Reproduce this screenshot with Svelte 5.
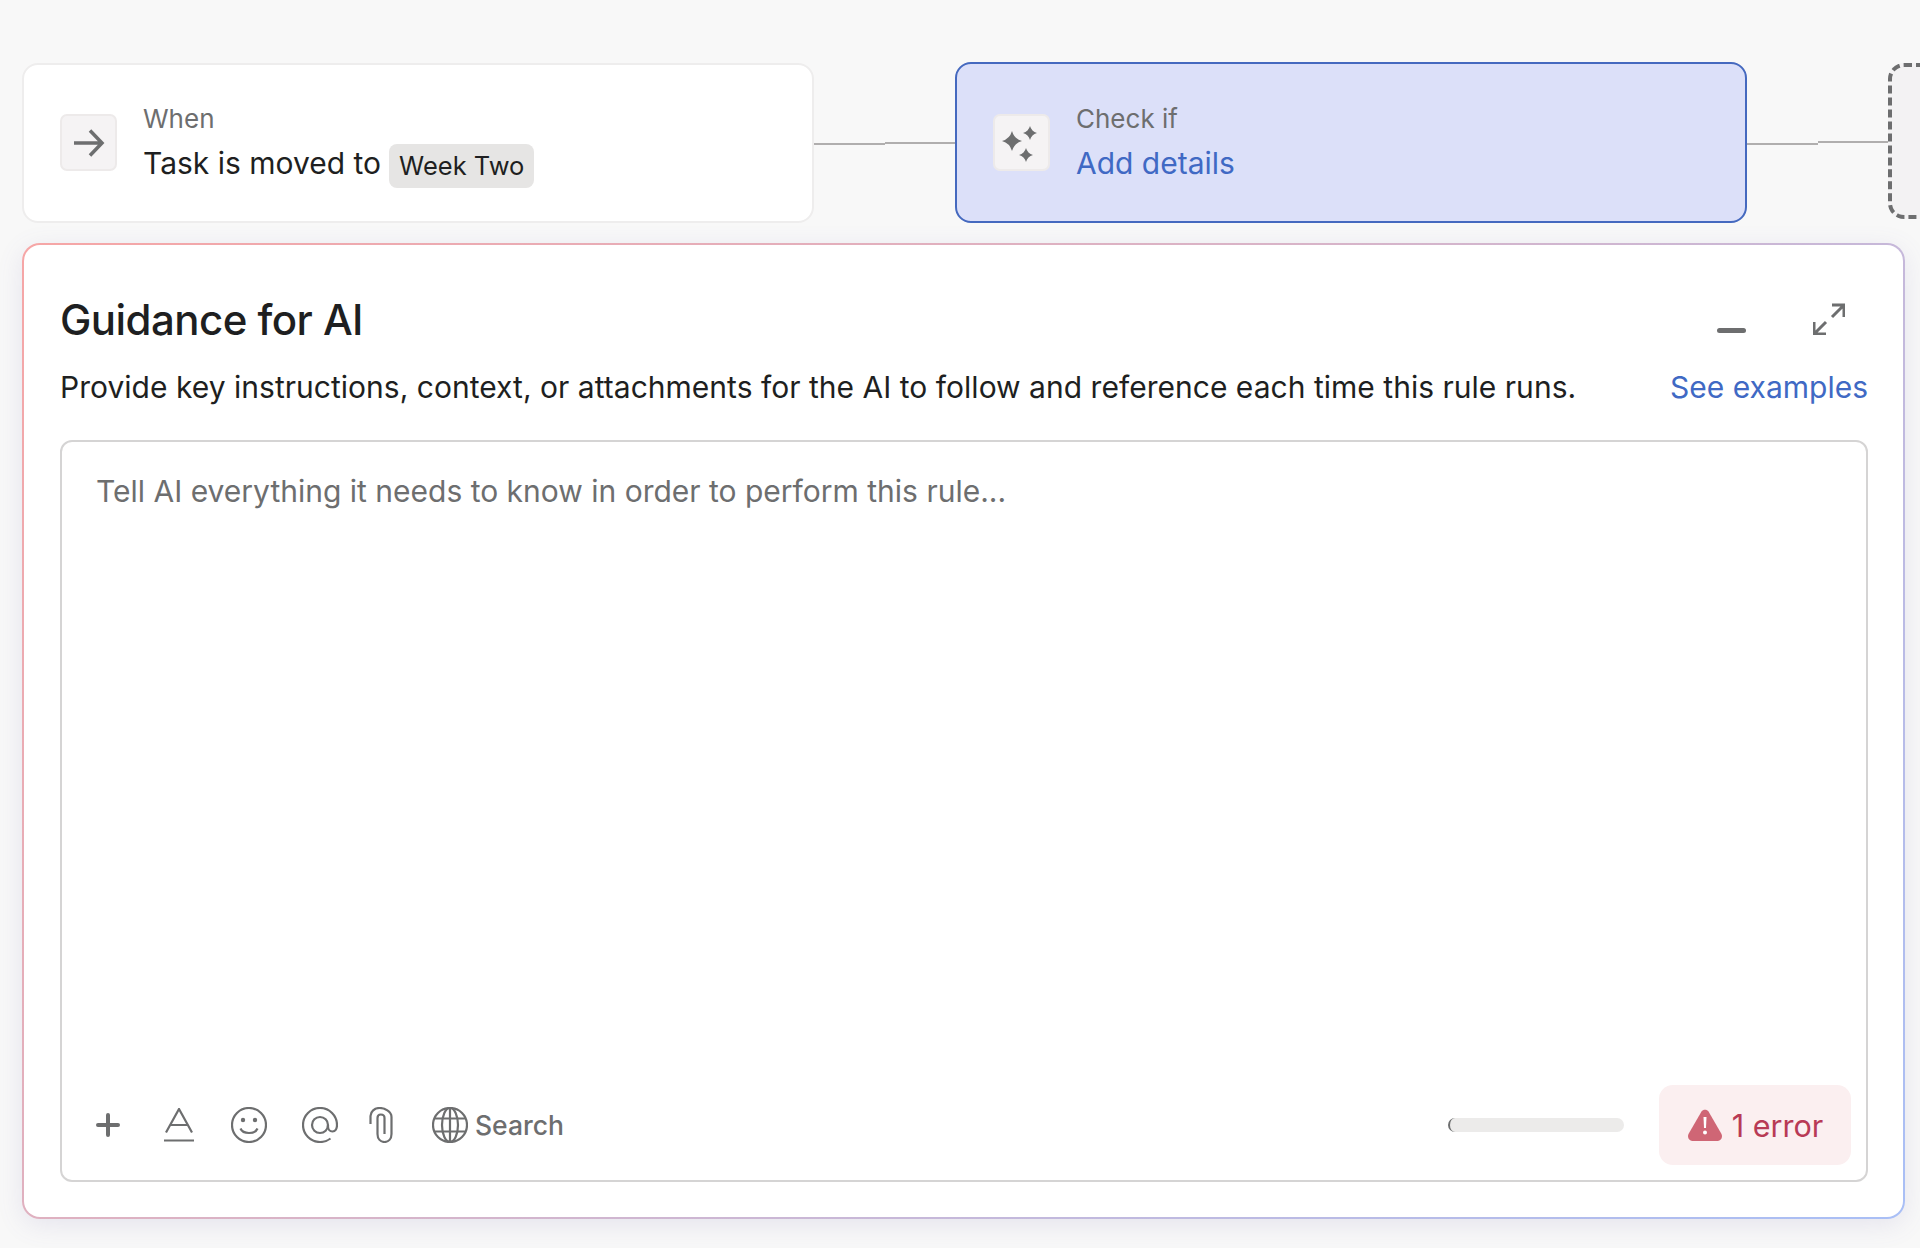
<script>
  const errorCount = 1

  // four point sparkle, concave sides
  const star = (x, y, r) => {
    const k = r * 0.22
    return `M${x} ${y - r}Q${x + k} ${y - k} ${x + r} ${y}Q${x + k} ${y + k} ${x} ${y + r}Q${x - k} ${y + k} ${x - r} ${y}Q${x - k} ${y - k} ${x} ${y - r}Z`
  }
  const sparkles = [star(10, 18, 10), star(28, 10, 7), star(24, 32, 7)]
</script>

<main class="page">
  <div class="flow">
    <section class="node when">
      <div class="node-icon">
        <svg viewBox="0 0 32 32" width="32" height="32" class="arrow"><path d="M1 16H29M17 3.500L29 16L17 28.500" /></svg>
      </div>
      <div class="node-text">
        <div class="label">When</div>
        <div class="value">Task is moved to <span class="chip">Week Two</span></div>
      </div>
    </section>

    <div class="link"><i class="a"></i><i class="b"></i></div>

    <section class="node check">
      <div class="node-icon">
        <svg viewBox="0 0 40 40" width="40" height="40" class="filled">
          {#each sparkles as d}
            <path {d} />
          {/each}
        </svg>
      </div>
      <div class="node-text">
        <div class="label">Check if</div>
        <div class="value link-text">Add details</div>
      </div>
    </section>

    <div class="link second"><i class="a"></i><i class="b"></i></div>

    <section class="ghost"></section>
  </div>

  <section class="panel">
    <header class="panel-head">
      <h1>Guidance for AI</h1>
      <div class="panel-actions">
        <span class="minimize"></span>
        <svg viewBox="0 0 32 32" width="32" height="32" class="line-icon expand">
          <path d="M19 2H31V14M31 2L19 14M1 19V31H13M1 31L13 19" />
        </svg>
      </div>
    </header>

    <div class="panel-desc">
      <p>Provide key instructions, context, or attachments for the AI to follow and reference each time this rule runs.</p>
      <span class="link-text">See examples</span>
    </div>

    <div class="editor">
      <div class="placeholder">Tell AI everything it needs to know in order to perform this rule...</div>

      <div class="toolbar">
        <div class="tools">
          <svg viewBox="0 0 24 24" width="24" height="24" class="line-icon plus"><path d="M12 2V22M2 12H22" /></svg>
          <svg viewBox="0 0 34 34" width="34" height="34" class="line-icon thin a-icon"><path d="M4 24.500L17 1L30 24.500M8 17H26M2 32.500H32" /></svg>
          <svg viewBox="0 0 36 36" width="36" height="36" class="line-icon thin smile">
            <circle cx="18" cy="18" r="17" />
            <circle cx="12" cy="13" r="2.200" class="dot" />
            <circle cx="24" cy="13" r="2.200" class="dot" />
            <path d="M9.500 21.500C12 27.500 24 27.500 26.500 21.500" />
          </svg>
          <svg viewBox="0 0 36 36" width="36" height="36" class="line-icon thin at">
            <path d="M28.500 31.500C25.500 33.800 22 35 18 35C8.600 35 1 27.400 1 18S8.600 1 18 1S35 8.600 35 18C35 21.500 33.400 24.500 30.500 24.500C27.500 24.500 26 22 26 19.500V18" />
            <circle cx="18" cy="18" r="8" />
          </svg>
          <svg viewBox="0 0 24 36" width="24" height="36" class="line-icon thin clip">
            <path d="M1.500 17V9C1.500 4.500 5.500 1 10.500 1S22.500 4.500 22.500 10V27C22.500 32 19.500 35 15.500 35S8.500 32 8.500 27V11C8.500 8.800 9.800 7.500 11.800 7.500S15.500 8.800 15.500 11V27" />
          </svg>
          <button class="search">
            <svg viewBox="0 0 36 36" width="36" height="36" class="line-icon thin">
              <circle cx="18" cy="18" r="17" />
              <ellipse cx="18" cy="18" rx="8" ry="17" />
              <path d="M18 1V35M3 11.500H33M3 24.500H33" />
            </svg>
            Search
          </button>
        </div>

        <div class="status">
          <div class="progress"></div>
          <button class="errors">
            <svg viewBox="0 0 36 32" width="36" height="32">
              <path d="M14.500 2.500C16 0 20 0 21.500 2.500L34.500 25C36 28 34 32 30.500 32H5.500C2 32 0 28 1.500 25Z" fill="#cf6675" />
              <path d="M16.500 8H19.500L19 19H17Z" fill="#fff" />
              <circle cx="18" cy="23.500" r="2" fill="#fff" />
            </svg>
            {errorCount} error
          </button>
        </div>
      </div>
    </div>
  </section>
</main>

<style>
  :global(body) {
    background: #f8f8f8;
    font-family: Inter, "Liberation Sans", sans-serif;
  }

  .page {
    width: 1920px;
    height: 1248px;
    box-sizing: border-box;
    padding: 62px 0 0 22px;
    overflow: hidden;
    color: #1e1f21;
  }

  .flow {
    display: flex;
    height: 161px;
    width: 1920px;
  }

  .node {
    flex: none;
    box-sizing: border-box;
    display: flex;
    align-items: center;
    gap: 26px;
    padding: 0 35px 0 36px;
    border-radius: 16px;
    border: 2px solid #eeeded;
    background: #fff;
  }

  .when {
    width: 792px;
    margin-top: 1px;
    padding-bottom: 1px;
  }

  .check {
    width: 792px;
    background: #dce0f9;
    border-color: #4569bf;
  }

  .node-icon {
    flex: none;
    width: 57px;
    height: 57px;
    box-sizing: border-box;
    display: flex;
    align-items: center;
    justify-content: center;
    background: #f5f3f4;
    border: 2px solid #edeaea;
    border-radius: 7px;
  }

  .node-icon svg,
  .line-icon {
    fill: none;
    stroke: #6d6e6f;
    stroke-width: 3;
  }

  .node-icon svg.arrow {
    stroke-width: 3.500;
  }

  .node-icon svg.filled {
    fill: #6d6e6f;
    stroke: none;
  }

  .label {
    font-size: 26px;
    line-height: 34px;
    color: #6d6e6f;
  }

  .value {
    display: flex;
    align-items: flex-start;
    gap: 8px;
    height: 40px;
    margin-top: 7px;
    font-size: 30px;
    line-height: 40px;
  }

  .chip {
    flex: none;
    margin-top: 1px;
    padding: 0 10px;
    height: 44px;
    line-height: 44px;
    font-size: 25.500px;
    background: #e6e5e4;
    border-radius: 8px;
  }

  .link-text {
    color: #4069c4;
  }

  .link {
    flex: none;
    width: 141px;
    display: flex;
    height: 4px;
    margin-top: 81px;
  }

  .link i {
    display: block;
    flex: 1;
    height: 2px;
    background: #b0aeae;
  }

  .link .b {
    margin-top: -1px;
  }

  .link.second .b {
    margin-top: -2px;
  }

  .ghost {
    flex: none;
    width: 200px;
    height: 156px;
    margin-top: 1px;
    box-sizing: border-box;
    border: 4px dashed #6d6e6f;
    border-radius: 16px;
    background: #f3f2f3;
  }

  .panel {
    width: 1883px;
    height: 976px;
    margin-top: 20px;
    box-sizing: border-box;
    display: flex;
    flex-direction: column;
    padding: 0 35px 35px 36px;
    border: 2px solid transparent;
    border-radius: 18px;
    background:
      linear-gradient(#fff, #fff) padding-box,
      linear-gradient(135deg, #f6a6a6 0%, #d8b4c8 45%, #a9bff6 100%) border-box;
    box-shadow: 0 6px 26px rgba(110, 100, 170, 0.13);
  }

  .panel-head {
    display: flex;
    justify-content: space-between;
    align-items: flex-start;
  }

  h1 {
    margin: 48px 0 0;
    font-size: 42px;
    line-height: 54px;
    font-weight: 550;
    letter-spacing: -0.550px;
  }

  .panel-actions {
    display: flex;
    align-items: flex-start;
    gap: 67px;
    margin: 58px 23px 0 0;
  }

  .minimize {
    width: 29px;
    height: 5px;
    margin-top: 25px;
    border-radius: 3px;
    background: #6d6e6f;
  }

  .panel-desc {
    display: flex;
    justify-content: space-between;
    align-items: center;
    margin-top: 19px;
    font-size: 30px;
    line-height: 42px;
  }

  .panel-desc p {
    margin: 0;
    letter-spacing: 0.020px;
  }

  .editor {
    flex: 1;
    margin-top: 32px;
    display: flex;
    flex-direction: column;
    border: 2px solid #d5d4d4;
    border-radius: 12px;
  }

  .placeholder {
    padding: 28px 34px 0;
    font-size: 30px;
    line-height: 42px;
    color: #6d6e6f;
  }

  .toolbar {
    margin-top: auto;
    display: flex;
    justify-content: space-between;
    align-items: center;
    padding: 0 15px 15px 34px;
  }

  .tools {
    display: flex;
    align-items: center;
    gap: 35px;
  }

  .plus {
    stroke-width: 4;
    stroke-linecap: round;
  }

  .a-icon {
    margin-left: 7px;
  }

  .clip {
    margin-left: -4px;
  }

  .line-icon.thin {
    stroke-width: 2.200;
  }

  .dot {
    fill: #6d6e6f;
    stroke: none;
  }

  .search {
    display: flex;
    align-items: center;
    gap: 7px;
    margin-left: 4px;
    padding: 0;
    border: 0;
    background: none;
    font: 500 26.500px Inter, "Liberation Sans", sans-serif;
    color: #6d6e6f;
  }

  .status {
    display: flex;
    align-items: center;
    gap: 35px;
  }

  .progress {
    width: 176px;
    height: 14px;
    border-radius: 7px;
    background: #ecebea;
    border-left: 2px solid #6d6e6f;
    box-sizing: border-box;
  }

  .errors {
    width: 192px;
    height: 80px;
    display: flex;
    align-items: center;
    justify-content: center;
    gap: 9px;
    padding: 0;
    border: 0;
    border-radius: 14px;
    background: #fbeff0;
    color: #b83a55;
    font: 400 30.500px Inter, "Liberation Sans", sans-serif;
  }
</style>
